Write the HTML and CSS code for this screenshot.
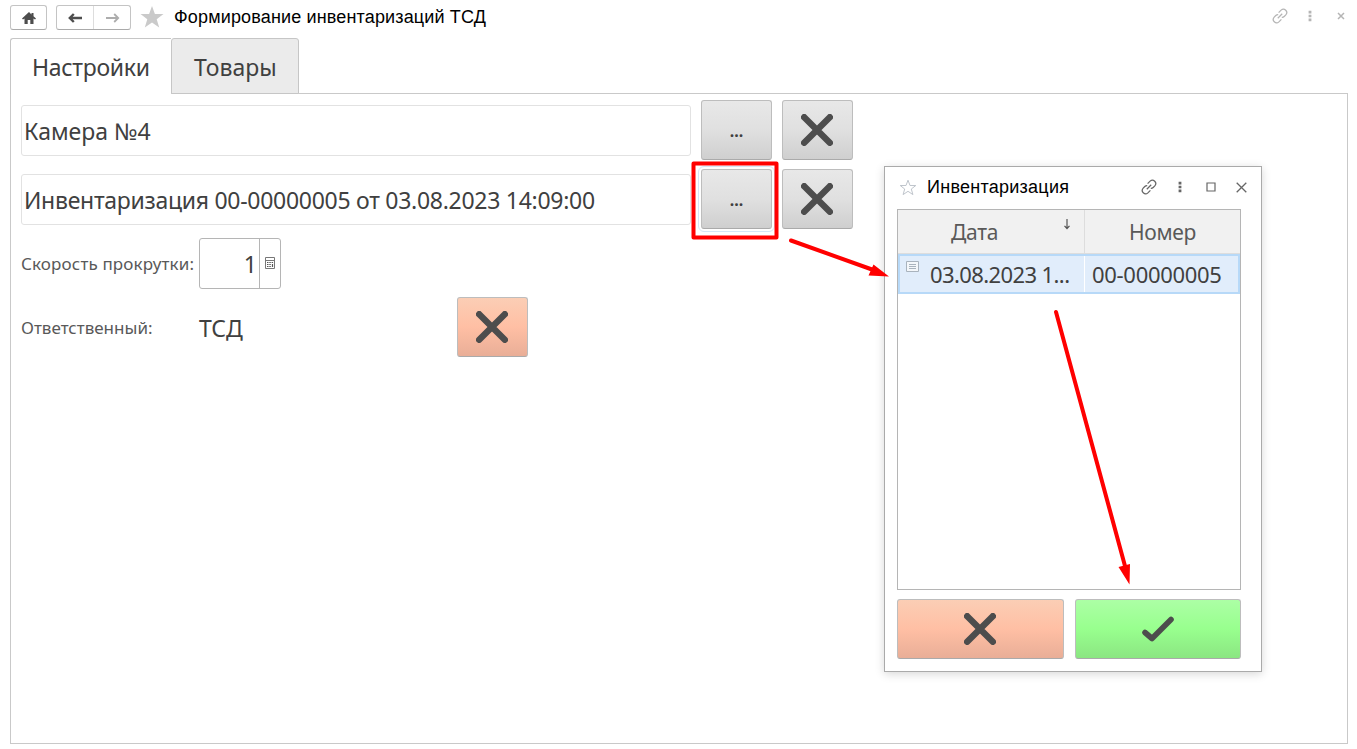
FILE: index.html
```html
<!DOCTYPE html>
<html lang="ru">
<head>
<meta charset="utf-8">
<title>Формирование инвентаризаций ТСД</title>
<link rel="stylesheet" href="styles.css">
</head>
<body>
<svg class="defs" aria-hidden="true">
  <symbol id="cross" viewBox="0 0 32 32"><path d="M3.2 3.2 28.8 28.8M28.8 3.2 3.2 28.8" fill="none" stroke="#4d4d4d" stroke-width="6.4" stroke-linecap="round"/></symbol>
  <symbol id="link" viewBox="0 0 16 16"><path d="M6.600 4.600 9.100 2.100C12.200-.7 16.700 3.600 13.800 6.900L12.200 8.500Q11.200 9.500 9.800 9.400M9.400 11.400 6.900 13.900C3.800 16.700-.7 12.400 2.200 9.100L3.800 7.500Q4.800 6.500 6.200 6.600M5.800 10.200 10.200 5.800" fill="none" stroke="currentColor" stroke-width="1.250"/></symbol>
  <symbol id="dots" viewBox="0 0 4 12"><path d="M.6 .8h2.8v2.6H.6zM.6 4.7h2.8v2.6H.6zM.6 8.6h2.8v2.6H.6z" fill="currentColor"/></symbol>
</svg>
<header class="topbar">
  <button class="nav home"><svg width="16" height="14" viewBox="0 0 16 14"><path d="M8 1 1 7.6l1 1L3.5 7.400V13h3.200V9h2.600v4h3.200V7.400L14 8.600l1-1-2.500-2.400V2h-2v1.400z" fill="#4d4d4d"/></svg></button>
  <div class="nav pair">
    <span class="half"><svg width="15" height="10" viewBox="0 0 15 10"><path d="M14 5H3M5.800 1 1.800 5l4 4" fill="none" stroke="#4d4d4d" stroke-width="2.400"/></svg></span>
    <span class="half next"><svg width="15" height="10" viewBox="0 0 15 10"><path d="M1 5h12M9.200 1l4 4-4 4" fill="none" stroke="#adadad" stroke-width="1.800"/></svg></span>
  </div>
  <svg class="fav" width="24" height="22" viewBox="0 0 24 22"><path d="M12 0 14.900 8H23.500L16.700 13.200 19.200 21.500 12 16.500 4.800 21.500 7.300 13.200.5 8H9.100z" fill="#cacaca"/></svg>
  <h1 class="title">Формирование инвентаризаций ТСД</h1>
  <div class="tools">
    <svg width="16" height="16"><use href="#link"/></svg>
    <svg class="more" width="4" height="12"><use href="#dots"/></svg>
    <svg width="8" height="8" viewBox="0 0 8 8"><path d="M1 1l6 6M7 1 1 7" stroke="currentColor" stroke-width="1.500"/></svg>
  </div>
</header>
<nav class="tabs">
  <div class="tab active"><span class="t-settings">Настройки</span></div>
  <div class="tab goods"><span class="t-goods">Товары</span></div>
</nav>
<main class="panel">
  <div class="row">
    <div class="field"><span>Камера №4</span></div>
    <button class="btn pick">...</button>
    <button class="btn"><svg width="32" height="32"><use href="#cross"/></svg></button>
  </div>
  <div class="row second">
    <div class="field"><span class="v-inv">Инвентаризация 00-00000005 от 03.08.2023 14:09:00</span></div>
    <button class="btn pick focused">...</button>
    <button class="btn"><svg width="32" height="32"><use href="#cross"/></svg></button>
  </div>
  <div class="speed">
    <label class="label"><span class="l-speed">Скорость прокрутки:</span></label>
    <div class="number"><span class="num">1</span><span class="calc"><svg width="10" height="12" viewBox="0 0 10 12"><path d="M.5.5h9v11h-9zM1 3.500h8" fill="none" stroke="#777"/><path d="M2 5.500h1.500M4.300 5.500h1.500M6.600 5.500h1.500M2 7.500h1.500M4.300 7.500h1.500M2 9.500h1.500M4.300 9.500h1.500M7.500 7v3" stroke="#555" stroke-width="1.200"/></svg></span></div>
  </div>
  <div class="person">
    <label class="label"><span>Ответственный:</span></label>
    <span class="who">ТСД</span>
    <button class="btn cancel"><svg width="32" height="32"><use href="#cross"/></svg></button>
  </div>
</main>
<section class="dialog">
  <div class="dlg-head">
    <svg width="18" height="17" viewBox="0 0 18 17"><path d="M9 1.200 11 6.500h5.800L12.300 10l1.600 5.600L9 12.300 4.100 15.600 5.700 10 1.200 6.500H7z" fill="none" stroke="#bfc5cc"/></svg>
    <h2 class="dlg-title">Инвентаризация</h2>
    <div class="dlg-tools">
      <svg width="16" height="16"><use href="#link"/></svg>
      <svg class="d-more" width="4" height="12"><use href="#dots"/></svg>
      <svg class="d-max" width="10" height="10" viewBox="0 0 10 10"><path d="M1 1h8v8H1z" fill="none" stroke="currentColor" stroke-width="1.200"/></svg>
      <svg width="11" height="11" viewBox="0 0 11 11"><path d="M.7.700l9.600 9.600M10.300.7.700 10.300" stroke="currentColor" stroke-width="1.300"/></svg>
    </div>
  </div>
  <div class="table">
    <div class="thead">
      <div class="c1"><span class="h-date">Дата</span><svg class="sort" width="8" height="11" viewBox="0 0 8 11"><path d="M4 0v9M1.500 6.800 4 9.500 6.500 6.800" fill="none" stroke="#555" stroke-width="1.200"/></svg></div>
      <div class="c2"><span class="h-num">Номер</span></div>
    </div>
    <div class="trow">
      <div class="c1"><svg class="doc" width="13" height="11" viewBox="0 0 13 11"><path d="M.5.500h12v10H.5z" fill="#f4f7fa" stroke="#a9b3bd"/><path d="M3 3.500h7M3 5.500h7M3 7.500h7" stroke="#a9b3bd"/></svg><span class="v-date">03.08.2023 1...</span></div>
      <div class="c2"><span class="v-num">00-00000005</span></div>
    </div>
  </div>
  <div class="actions">
    <button class="btn cancel"><svg width="32" height="32"><use href="#cross"/></svg></button>
    <button class="btn ok"><svg width="32" height="26" viewBox="0 0 32 26"><path d="M3 16.500 10 22.500 29 3.500" fill="none" stroke="#4d4d4d" stroke-width="5.600" stroke-linecap="round" stroke-linejoin="round"/></svg></button>
  </div>
</section>
<svg class="marks" width="1357" height="749" viewBox="0 0 1357 749">
  <rect x="693.500" y="163.500" width="83" height="74" fill="none" stroke="red" stroke-width="4" stroke-linejoin="round"/>
  <g stroke="red" stroke-width="4" stroke-linecap="round"><path d="M791 240.500 872 269.500"/><path d="M1056 312 1125 566"/></g>
  <path d="M889 276.500 868.500 275.500 873.500 264.500zM1129.500 584.500 1118.500 567 1130 564z" fill="red"/>
</svg>
</body>
</html>
```

FILE: styles.css
```css
* { box-sizing: border-box; }
body { margin: 0; width: 1357px; height: 749px; overflow: hidden; position: relative; background: #fff; color: #404040; font-family: "Noto Sans", "Open Sans", sans-serif; font-size: 23px; display: flex; flex-direction: column; }
svg { display: block; flex: none; }
span { white-space: nowrap; }
h1, h2 { margin: 0; font-family: "Liberation Sans", Arial, sans-serif; font-weight: 400; color: #000; white-space: nowrap; }
button { padding: 0; font-family: inherit; color: inherit; }
.defs { position: absolute; width: 0; height: 0; }

.topbar { height: 38px; padding: 5px 12px 0 10px; display: flex; align-items: flex-start; }
.nav { height: 25px; border: 1px solid #c4c4c4; border-bottom-color: #aaa; border-radius: 3px; background: #fff; display: flex; align-items: center; justify-content: center; }
.home { width: 37px; margin-right: 9px; }
.pair { width: 75px; margin-right: 9px; }
.half { flex: 1; height: 100%; display: flex; align-items: center; justify-content: center; }
.next { border-left: 1px solid #ddd; }
.fav { margin-top: 1px; }
.title { font-size: 18px; line-height: 24px; margin-left: 10px; letter-spacing: 0.15px; }
.tools { margin: 3px 0 0 auto; display: flex; align-items: center; color: #b5b5b5; }
.tools svg:first-child { margin-right: 1px; }
.more { margin: 0 25px 0 19px; }

.tabs { height: 56px; padding-left: 10px; display: flex; position: relative; z-index: 1; margin-bottom: -1px; }
.tab { border: 1px solid #c6c6c6; border-bottom: 0; border-radius: 3px 3px 0 0; display: flex; align-items: center; padding-left: 21px; padding-top: 1px; }
.active { width: 161px; background: #fff; border-right: 0; border-radius: 3px 0 0 0; }
.goods { width: 128px; background: #ebebeb; border-bottom: 1px solid #c6c6c6; padding-top: 2px; padding-left: 22px; }

.panel { width: 1338px; height: 651px; margin-left: 10px; border: 1px solid #c9c9c9; padding: 6px 10px; }
.row { display: flex; align-items: flex-start; height: 61px; }
.second { margin-top: 8px; }
.field { width: 670px; height: 51px; border: 1px solid #e2e2e2; border-radius: 3px; display: flex; align-items: center; padding-left: 2px; padding-top: 1px; margin: 5px 10px 0 0; }
.btn { width: 71px; height: 60px; border: 1px solid #bdbdbd; border-bottom-color: #aaa; border-radius: 3px; background: linear-gradient(#e8e8e8, #e0e0e0 50%, #cfcfcf); display: flex; align-items: center; justify-content: center; }
.btn svg { margin-right: 1px; }
.pick { font-size: 16px; font-weight: 700; margin-right: 10px; padding-top: 2px; }
.focused { outline: 1px solid #d5e7f7; outline-offset: 2px; }
.label { width: 178px; font-size: 17px; color: #595959; display: flex; }
.speed { display: flex; align-items: center; margin-top: 8px; height: 51px; }
.number { width: 82px; height: 51px; border: 1px solid #b5b5b5; border-radius: 3px; display: flex; }
.num { width: 60px; border-right: 1px solid #b5b5b5; text-align: right; padding-right: 2px; line-height: 51px; }
.calc { flex: 1; display: flex; align-items: center; justify-content: center; padding-bottom: 1px; }
.person { display: flex; align-items: center; margin-top: 8px; }
.who { width: 258px; padding-top: 1px; }
.cancel { background: linear-gradient(#fbceb5, #ffbfa4 50%, #e9ae97); }
.ok { background: linear-gradient(#acffa5, #98ff8e 50%, #8be682); }
.ok svg { margin-right: 0; }

.dialog { position: absolute; left: 884px; top: 166px; width: 378px; height: 506px; background: #fff; border: 1px solid #aaa; box-shadow: 0 2px 9px rgba(0,0,0,.16); padding: 0 20px 0 12px; font-size: 22px; }
.dlg-head { height: 42px; display: flex; align-items: center; padding: 0 0 2px 2px; }
.dlg-title { font-size: 18px; margin-left: 10px; letter-spacing: 0.25px; }
.dlg-tools { margin: 0 -6px 0 auto; display: flex; align-items: center; color: #666; }
.d-more { margin: 0 24px 0 21px; }
.d-max { margin-right: 20px; }
.table { width: 344px; height: 381px; border: 1px solid #b5b5b5; }
.thead { height: 44px; background: #f1f1f1; border-bottom: 1px solid #ddd; display: flex; color: #595959; font-size: 21px; letter-spacing: -0.3px; }
.c1 { width: 187px; display: flex; position: relative; align-items: center; border-right: 1px solid #ddd; }
.c2 { flex: 1; display: flex; align-items: center; }
.h-date { margin-left: 53px; }
.sort { position: absolute; left: 165px; top: 9px; }
.h-num { margin-left: 44px; }
.trow { height: 40px; background: #e1edfb; border: 2px solid #b7d9f8; display: flex; }
.trow .c1 { width: 185px; border-right-color: #fff; }
.doc { position: absolute; left: 6px; top: 5px; }
.v-date { margin-left: 30px; }
.v-num { margin-left: 7px; }
.actions { display: flex; gap: 11px; margin-top: 9px; width: 344px; }
.actions .btn { flex: 1; width: auto; }
.marks { position: absolute; left: 0; top: 0; z-index: 3; }

.t-goods { letter-spacing: 0; }
.t-settings { letter-spacing: -0.3px; }
.v-inv { letter-spacing: -0.28px; }
.l-speed { letter-spacing: 0.15px; }
.v-date { letter-spacing: -0.6px; }
.v-num { letter-spacing: -0.3px; }
```
